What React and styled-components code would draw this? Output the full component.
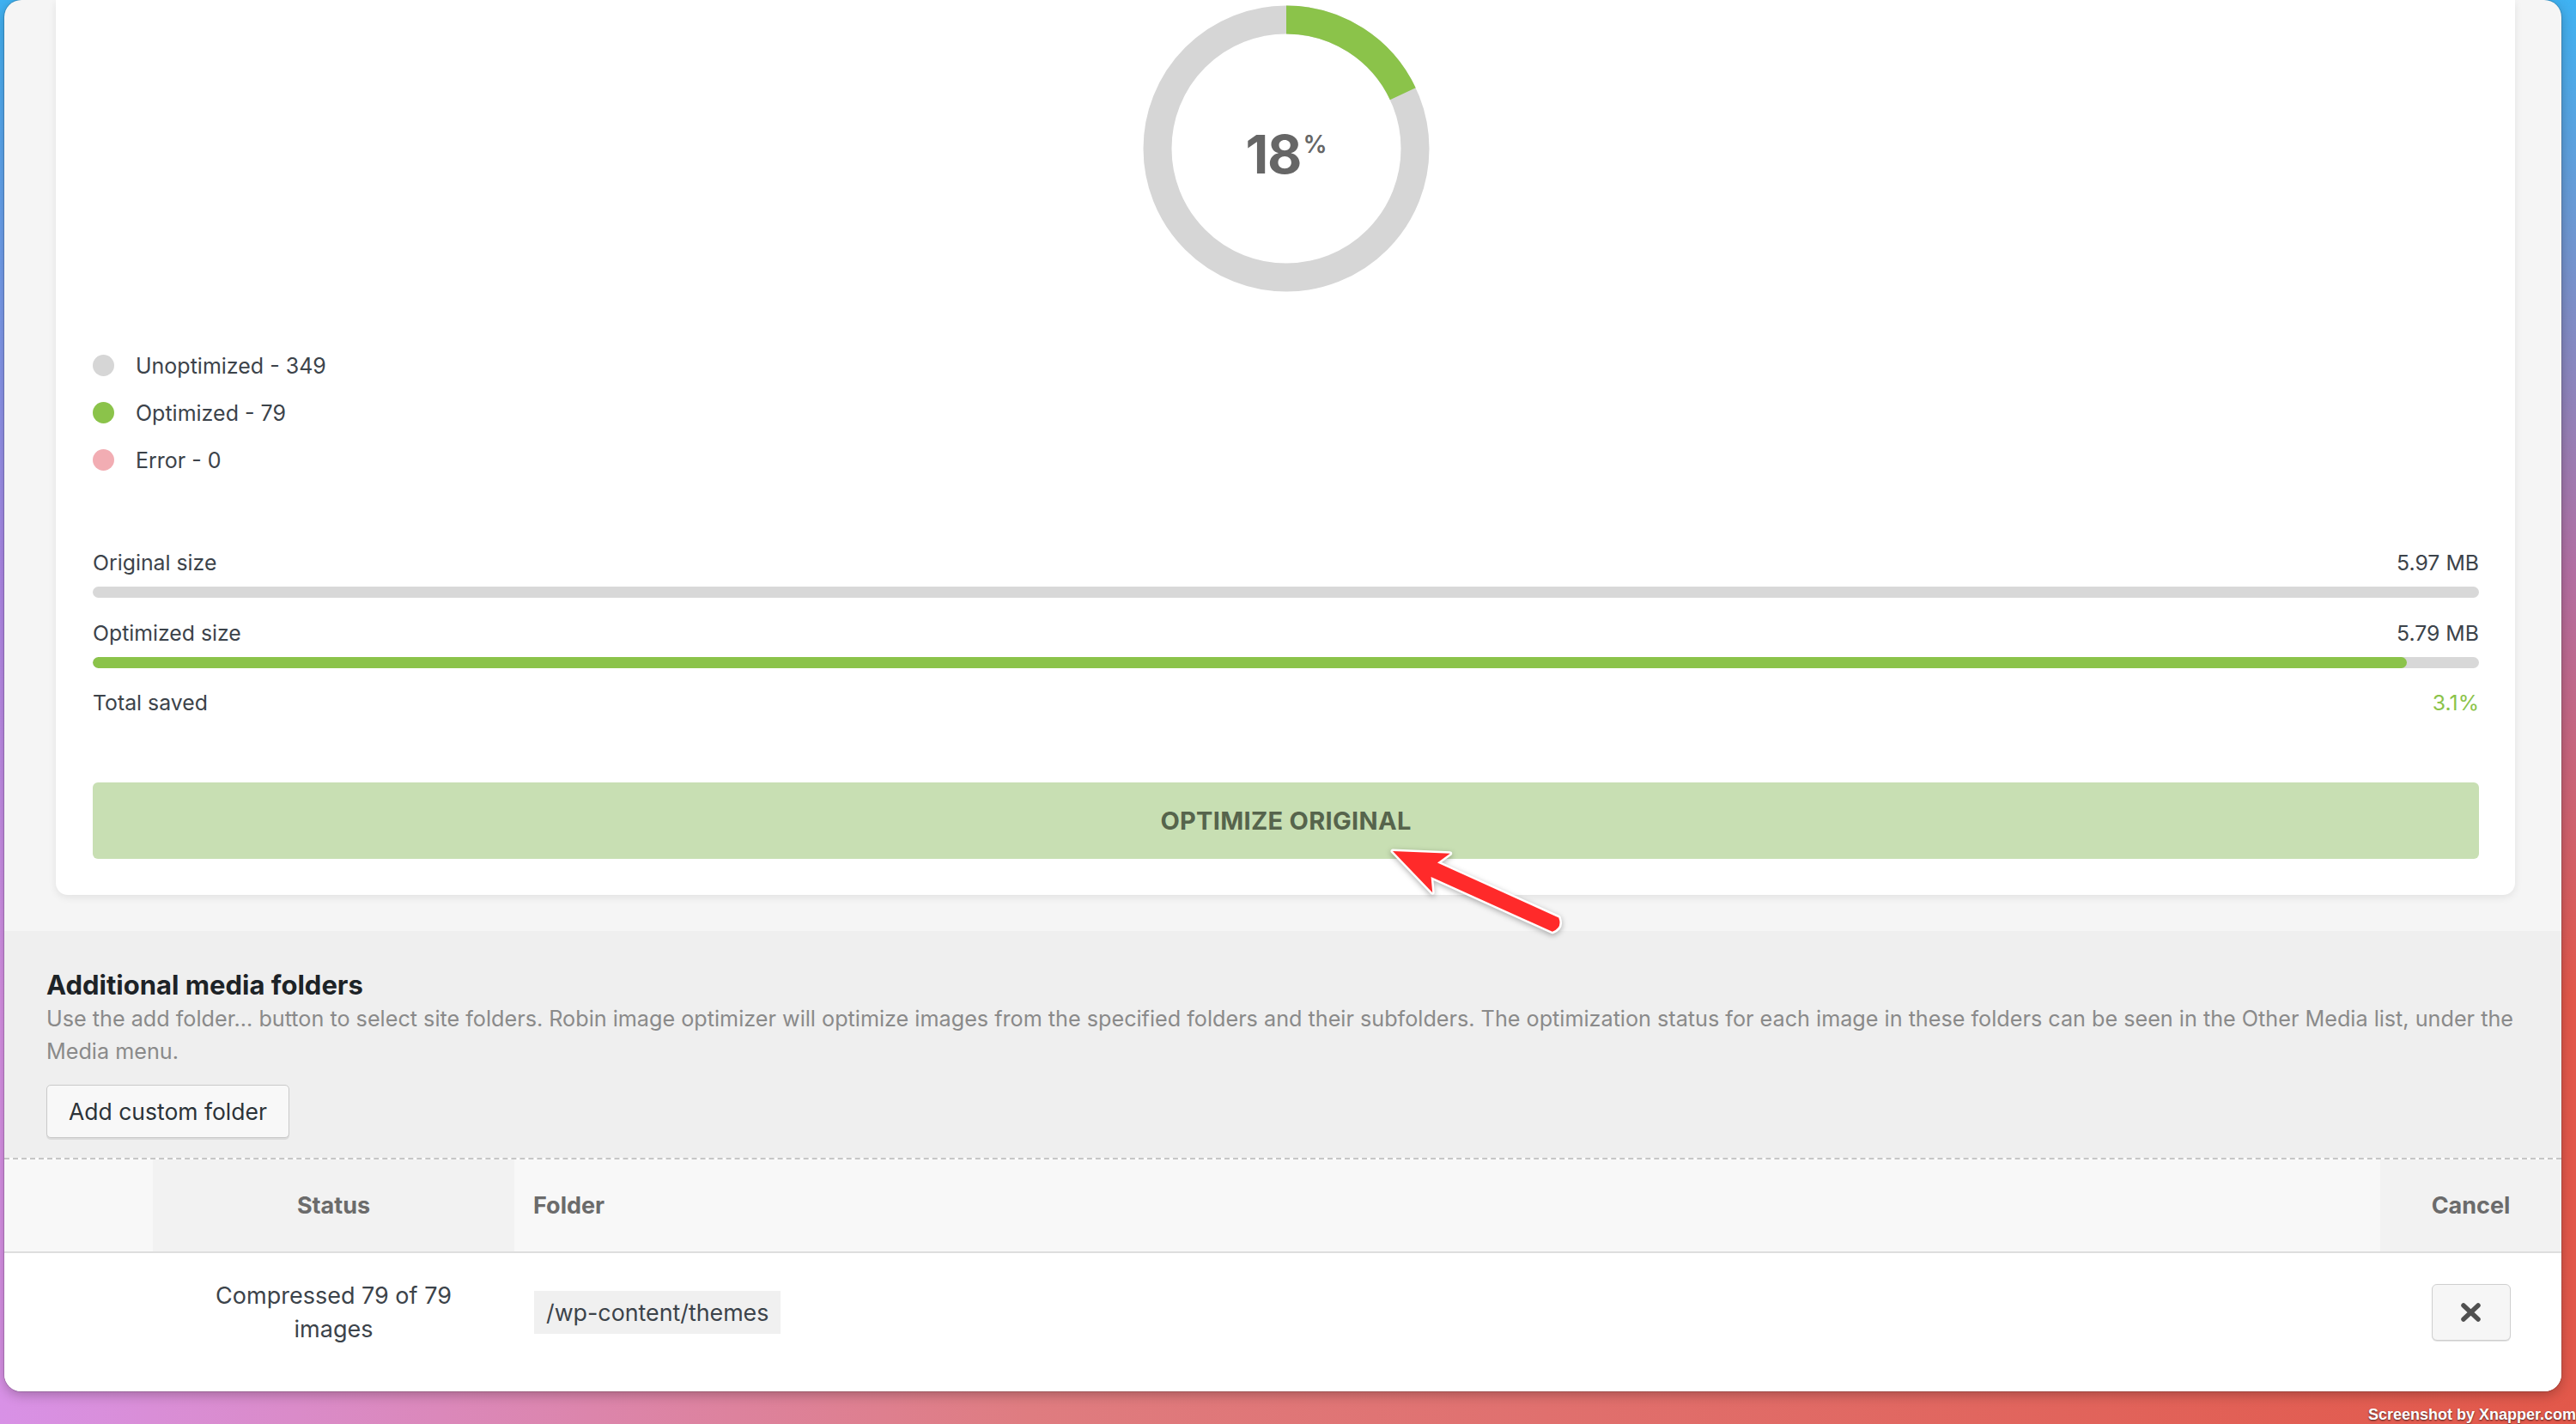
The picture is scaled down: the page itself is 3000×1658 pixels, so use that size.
import React from 'react'
import styled, { createGlobalStyle } from 'styled-components'

const GlobalStyle = createGlobalStyle`
  html, body { margin: 0; padding: 0; }
  body {
    width: 3000px;
    height: 1658px;
    overflow: hidden;
    font-family: Inter, "Noto Sans", sans-serif;
    background:
      linear-gradient(180deg, #3fb2f2 0%, rgba(140, 130, 235, 0.55) 40%, rgba(140, 130, 235, 0) 70%),
      linear-gradient(90deg, #d891e6 0%, #df7c80 40%, #e2584a 100%);
  }
`

const Desktop = styled.div`
  display: flex;
  flex-direction: column;
  width: 3000px;
  height: 1658px;
`

const Window = styled.div`
  position: relative;
  display: flex;
  flex-direction: column;
  margin-left: 5px;
  width: 2978px;
  height: 1620px;
  border-radius: 20px;
  overflow: hidden;
  background: #f5f5f5;
  box-shadow: 0 0 0 1px rgba(0, 0, 0, 0.14), 0 4px 14px rgba(0, 0, 0, 0.25);
`

const TopArea = styled.div`
  padding: 0 54px 42px 60px;
`

const Card = styled.div`
  background: #fff;
  border-radius: 0 0 14px 14px;
  box-shadow: 0 3px 10px rgba(0, 0, 0, 0.08);
  padding: 6px 42px 42px 43px;
`

const DonutWrap = styled.div`
  position: relative;
  width: 334px;
  height: 334px;
  margin: 0 auto;
`

const DonutLabel = styled.div`
  position: absolute;
  inset: 0;
  display: flex;
  align-items: center;
  justify-content: center;
  padding-top: 12px;
  color: #666;
  font-weight: 700;
  font-size: 62px;
  letter-spacing: -1px;
  sup {
    align-self: flex-start;
    margin: 136px 0 0 2px;
    font-size: 28px;
    font-weight: 600;
    line-height: 1;
    vertical-align: baseline;
  }
`

const Legend = styled.ul`
  list-style: none;
  margin: 58px 0 0;
  padding: 0;
`

const LegendItem = styled.li`
  display: flex;
  align-items: center;
  gap: 25px;
  height: 55px;
  font-size: 25px;
  color: #3c434a;
`

const Dot = styled.span`
  width: 25px;
  height: 25px;
  border-radius: 50%;
  background: ${p => p.$color};
`

const Sizes = styled.div`
  margin-top: 77px;
`

const SizeRow = styled.div`
  display: flex;
  justify-content: space-between;
  line-height: 30px;
  font-size: 24.8px;
  color: #3c434a;
  margin-top: ${p => p.$gap || 0}px;
`

const SizeValue = styled.span`
  color: ${p => p.$green ? '#8bc34a' : '#3c434a'};
`

const Track = styled.div`
  height: 13px;
  margin-top: 13px;
  border-radius: 7px;
  background: #d8d8d8;
  overflow: hidden;
`

const Fill = styled.div`
  height: 100%;
  border-radius: 7px;
  background: #8bc34a;
`

const OptimizeButton = styled.button`
  display: block;
  width: 100%;
  height: 89px;
  margin-top: 78px;
  border: none;
  border-radius: 6px;
  background: #c8dfb3;
  color: #56644c;
  font-family: inherit;
  font-size: 29px;
  font-weight: 700;
  letter-spacing: 0.3px;
`

const FolderSection = styled.section`
  background: #efefef;
  padding: 46px 49px 23px;
`

const SectionTitle = styled.h3`
  margin: 0;
  font-size: 31px;
  line-height: 34px;
  font-weight: 700;
  color: #1d2327;
`

const SectionText = styled.p`
  margin: 3px 0 0;
  font-size: 25.2px;
  line-height: 38px;
  color: #8a8a8a;
`

const AddButton = styled.button`
  margin-top: 20px;
  height: 62px;
  padding: 0 25px;
  background: #f8f8f8;
  border: 1px solid #c9c9c9;
  border-radius: 5px;
  box-shadow: 0 2px 0 #dcdcdc;
  font-family: inherit;
  font-size: 26.5px;
  color: #2c3338;
`

const Table = styled.div`
  display: grid;
  grid-template-columns: 173px 421px 1fr 211px;
  border-top: 2px dashed #c6c6c6;
  flex: 1;
  background: #fff;
`

const HeadCell = styled.div`
  height: 107px;
  display: flex;
  align-items: center;
  justify-content: ${p => p.$align || 'center'};
  padding-left: ${p => p.$pad || 0}px;
  background: ${p => p.$sorted ? '#f2f2f2' : '#f8f8f8'};
  border-bottom: 2px solid #dedede;
  font-size: 27px;
  font-weight: 700;
  color: #6b6b6b;
`

const BodyCell = styled.div`
  height: 161px;
  box-sizing: border-box;
  padding: 24px 0 47px ${p => p.$pad || 0}px;
  display: flex;
  align-items: center;
  justify-content: ${p => p.$align || 'center'};
  text-align: center;
  font-size: 27px;
  line-height: 39px;
  color: #3c434a;
`

const StatusText = styled.span`
  width: 310px;
`

const FolderPath = styled.code`
  display: inline-flex;
  align-items: center;
  height: 50px;
  padding: 0 14px;
  background: #f0f0f0;
  font-family: Inter, "Noto Sans", sans-serif;
  font-size: 26.8px;
  color: #3c434a;
`

const CancelButton = styled.button`
  width: 92px;
  height: 66px;
  display: flex;
  align-items: center;
  justify-content: center;
  background: #f6f6f6;
  border: 1px solid #cfcfcf;
  border-radius: 6px;
  box-shadow: 0 1px 0 #e2e2e2;
`

const Arrow = styled.svg`
  position: absolute;
  left: 1585px;
  top: 955px;
  overflow: visible;
  filter: drop-shadow(0 2px 3px rgba(0, 0, 0, 0.3));
`

const Footer = styled.div`
  flex: 1;
  display: flex;
  justify-content: flex-end;
  align-items: flex-end;
`

const Watermark = styled.span`
  font-family: "Liberation Sans", Arial, sans-serif;
  font-size: 18px;
  font-weight: 700;
  line-height: 22px;
  color: #fff;
  text-shadow: 0 1px 2px rgba(0, 0, 0, 0.7);
`

const R = 150
const C = 2 * Math.PI * R

function Donut({ percent }) {
  return (
    <DonutWrap>
      <svg width="334" height="334" viewBox="0 0 334 334">
        <circle cx="167" cy="167" r={R} fill="none" stroke="#d6d6d6" strokeWidth="33" />
        <circle
          cx="167" cy="167" r={R} fill="none" stroke="#8bc34a" strokeWidth="33"
          strokeDasharray={`${(C * percent) / 100} ${C}`}
          transform="rotate(-90 167 167)"
        />
      </svg>
      <DonutLabel>{percent}<sup>%</sup></DonutLabel>
    </DonutWrap>
  )
}

export default function App() {
  return (
    <Desktop>
      <GlobalStyle />
      <Window>
        <TopArea>
          <Card>
            <Donut percent={18} />
            <Legend>
              <LegendItem><Dot $color="#d6d6d6" />Unoptimized - 349</LegendItem>
              <LegendItem><Dot $color="#8bc34a" />Optimized - 79</LegendItem>
              <LegendItem><Dot $color="#f2adb3" />Error - 0</LegendItem>
            </Legend>
            <Sizes>
              <SizeRow><span>Original size</span><SizeValue>5.97 MB</SizeValue></SizeRow>
              <Track />
              <SizeRow $gap={26}><span>Optimized size</span><SizeValue>5.79 MB</SizeValue></SizeRow>
              <Track><Fill style={{ width: `${(5.79 / 5.97) * 100}%` }} /></Track>
              <SizeRow $gap={25}><span>Total saved</span><SizeValue $green>3.1%</SizeValue></SizeRow>
            </Sizes>
            <OptimizeButton>OPTIMIZE ORIGINAL</OptimizeButton>
          </Card>
        </TopArea>

        <FolderSection>
          <SectionTitle>Additional media folders</SectionTitle>
          <SectionText>
            Use the add folder... button to select site folders. Robin image optimizer will optimize images from the specified folders and their subfolders. The optimization status for each image in these folders can be seen in the Other Media list, under the Media menu.
          </SectionText>
          <AddButton>Add custom folder</AddButton>
        </FolderSection>

        <Table>
          <HeadCell />
          <HeadCell $sorted>Status</HeadCell>
          <HeadCell $align="flex-start" $pad={22}>Folder</HeadCell>
          <HeadCell $sorted>Cancel</HeadCell>

          <BodyCell />
          <BodyCell><StatusText>Compressed 79 of 79 images</StatusText></BodyCell>
          <BodyCell $align="flex-start" $pad={23}><FolderPath>/wp-content/themes</FolderPath></BodyCell>
          <BodyCell>
            <CancelButton>
              <svg width="23" height="22" viewBox="0 0 23 22">
                <path d="M3 3 L20 19 M20 3 L3 19" stroke="#505050" strokeWidth="5.5" strokeLinecap="round" />
              </svg>
            </CancelButton>
          </BodyCell>
        </Table>

        <Arrow width="260" height="160" viewBox="0 0 260 160">
          <g transform="translate(32 36) rotate(24.3)">
            <path
              d="M0 0 L62 -25 L53 -9 L208 -9 Q217 0 208 9 L53 9 L62 25 Z"
              fill="#ff2a2a"
              stroke="#fff"
              strokeWidth="5"
              strokeLinejoin="round"
              paintOrder="stroke"
            />
          </g>
        </Arrow>
      </Window>
      <Footer>
        <Watermark>Screenshot by Xnapper.com</Watermark>
      </Footer>
    </Desktop>
  )
}
